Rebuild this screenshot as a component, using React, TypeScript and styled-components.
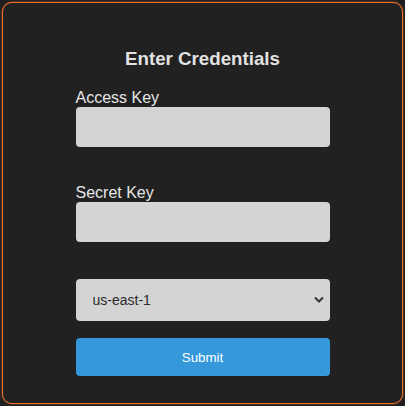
import React, { useState } from 'react';
import styled, { createGlobalStyle } from 'styled-components';

const GlobalStyle = createGlobalStyle`
  html, body {
    margin: 0;
    padding: 0;
    background: #1f1f1f;
    font-family: "Liberation Sans", Arial, sans-serif;
  }
`;

const Card = styled.div`
  box-sizing: border-box;
  margin: 2px;
  width: 401px;
  height: 402px;
  padding: 45px 0 0;
  background: #212121;
  border: 1px solid #e8732c;
  border-radius: 10px;
  box-shadow: 0 0 2px rgba(232, 115, 44, 0.8);
  display: flex;
  flex-direction: column;
  align-items: center;
`;

const Title = styled.h3`
  margin: 0 0 19px;
  font-size: 18.72px;
  font-weight: 700;
  color: #e2e2e2;
  line-height: 22px;
`;

const Form = styled.form`
  width: 254px;
  display: flex;
  flex-direction: column;
`;

const Field = styled.div<{ $gap: number }>`
  display: flex;
  flex-direction: column;
  margin-bottom: ${p => p.$gap}px;
`;

const Label = styled.label`
  font-size: 16px;
  line-height: 18px;
  color: #e6e6e6;
`;

const Input = styled.input`
  box-sizing: border-box;
  height: 40px;
  width: 100%;
  border: none;
  border-radius: 4px;
  background: #d4d4d4;
  padding: 0 10px;
  font-size: 14px;
  font-family: inherit;
  outline: none;
`;

const SelectWrap = styled.div`
  position: relative;
  margin-bottom: 17px;
`;

const Select = styled.select`
  box-sizing: border-box;
  appearance: none;
  -webkit-appearance: none;
  width: 100%;
  height: 42px;
  border: none;
  border-radius: 4px;
  background: #d4d4d4;
  padding: 0 17px;
  font-size: 14px;
  font-family: inherit;
  color: #2b2b2b;
  outline: none;
`;

const Chevron = styled.svg`
  position: absolute;
  right: 5px;
  top: 16px;
  pointer-events: none;
`;

const SubmitButton = styled.button`
  height: 38px;
  border: none;
  border-radius: 4px;
  background: #3498db;
  color: #ffffff;
  font-size: 13.33px;
  font-family: inherit;
  cursor: pointer;
`;

const regions = ['us-east-1', 'us-east-2', 'us-west-1', 'us-west-2', 'eu-west-1'];

export default function App() {
  const [region, setRegion] = useState('us-east-1');

  return (
    <>
      <GlobalStyle />
      <Card>
        <Title>Enter Credentials</Title>
        <Form onSubmit={e => e.preventDefault()}>
          <Field $gap={37}>
            <Label htmlFor="access">Access Key</Label>
            <Input id="access" type="text" />
          </Field>
          <Field $gap={37}>
            <Label htmlFor="secret">Secret Key</Label>
            <Input id="secret" type="password" />
          </Field>
          <SelectWrap>
            <Select value={region} onChange={e => setRegion(e.target.value)}>
              {regions.map(r => (
                <option key={r} value={r}>{r}</option>
              ))}
            </Select>
            <Chevron width="12" height="9" viewBox="0 0 12 9">
              <path d="M2 2.5 L6 6.5 L10 2.5" fill="none" stroke="#333" strokeWidth="2" />
            </Chevron>
          </SelectWrap>
          <SubmitButton type="submit">Submit</SubmitButton>
        </Form>
      </Card>
    </>
  );
}
